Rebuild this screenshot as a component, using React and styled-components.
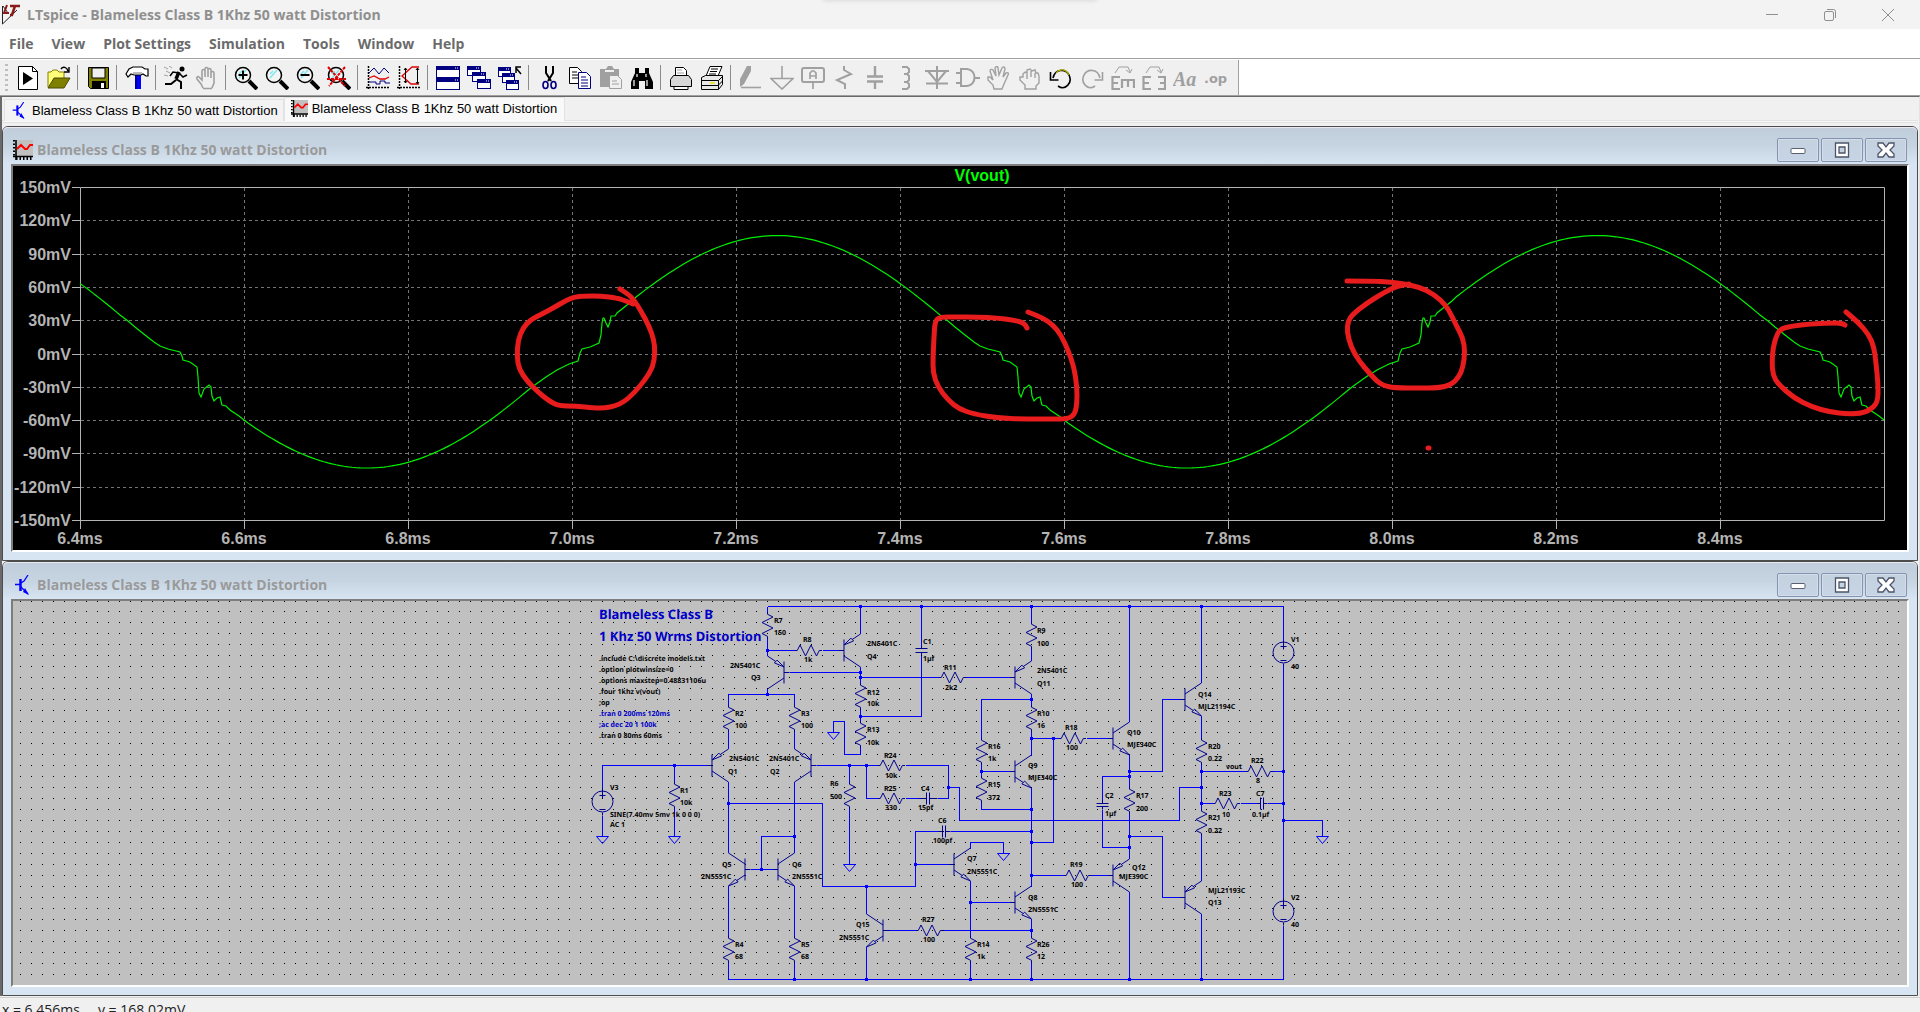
import styled, { createGlobalStyle } from "styled-components";

const ui = `"Open Sans", "Noto Sans", sans-serif`;
const arial = `"Liberation Sans", Arial, sans-serif`;

const GlobalStyle = createGlobalStyle`
  * {
    box-sizing: border-box;
  }

  body {
    margin: 0;
    background: #f0f0f0;
    font-family: ${ui};
  }

  button {
    padding: 0;
    border: 0;
    background: none;
    font: inherit;
    color: inherit;
  }

  svg {
    display: block;
    flex: none;
  }
`;

const StyledApp = styled.div`
  display: flex;
  flex-direction: column;
  height: 100vh;
  overflow: hidden;

  > * {
    flex: none;
  }
`;

const StyledTitleBar = styled.header`
  position: relative;
  display: flex;
  align-items: center;
  height: 29px;
  padding-right: 3px;
  background: #f3f3f3;
  color: #8f8f8f;

  h1 {
    flex: 1;
    margin: 0 0 0 7px;
    font-size: 14px;
    font-weight: 700;
    line-height: 28px;
  }
`;

const StyledSnapHint = styled.div`
  position: absolute;
  top: -8px;
  left: 50%;
  width: 276px;
  height: 8px;
  margin-left: -138px;
  border-radius: 8px;
  box-shadow: 0 1px 4px rgba(0, 0, 0, 0.1);
`;

const StyledCaptionButton = styled.button`
  display: flex;
  align-items: center;
  justify-content: center;
  width: 58px;
  height: 29px;
`;

const StyledMenu = styled.nav`
  display: flex;
  gap: 18px;
  height: 30px;
  padding: 0 9px;
  background: #fff;
  border-bottom: 1px solid #a0a0a0;

  button {
    color: #6b6b6b;
    font-size: 14px;
    font-weight: 700;
    line-height: 28px;
  }
`;

const StyledToolbarRow = styled.div`
  display: flex;
  height: 37px;
  background: #fff;
  border-top: 1px solid #fff;
  border-bottom: 1px solid #a0a0a0;
`;

const StyledToolbar = styled.div`
  display: flex;
  align-items: center;
  padding-right: 7px;
  background: #f0f0f0;
  border-right: 1px solid #a0a0a0;
`;

const StyledGrip = styled.div`
  width: 3px;
  height: 28px;
  margin: 0 4px 0 5px;
  background: repeating-linear-gradient(#bdbdbd 0 2px, transparent 2px 5px);
`;

const StyledToolButton = styled.button`
  display: flex;
  align-items: center;
  justify-content: center;
  width: 31px;
  height: 34px;
`;

const StyledSeparator = styled.div`
  width: 1px;
  height: 25px;
  margin: 0 4px 0 3px;
  background: #8c8c8c;
`;

const StyledWorkspace = styled.main`
  border: solid #696969;
  border-width: 1px 1px 0 2px;
  border-right-color: #e3e3e3;
  padding-right: 1px;
`;

const StyledTabs = styled.div`
  display: flex;
  align-items: flex-start;
  height: 29px;
  padding-left: 2px;
  background: linear-gradient(
    transparent 23px,
    #e2e2e2 23px 24px,
    #f8f8f8 24px 25px,
    #e2e2e2 25px 26px,
    transparent 26px
  );
`;

const StyledTab = styled.button`
  display: flex;
  align-items: center;
  gap: 4px;
  height: ${({ $active }) => ($active ? "24px" : "22px")};
  margin-top: ${({ $active }) => ($active ? "0" : "2px")};
  padding: ${({ $active }) => ($active ? "0 7px 2px 6px" : "0 5px 0 6px")};
  background: ${({ $active }) => ($active ? "#f9f9f9" : "#f3f3f3")};
  border: solid #e2e2e2;
  border-width: 1px 1px 0;
  color: #000;
  font-family: ${arial};
  font-size: 13px;
`;

const StyledWindow = styled.section`
  padding: 0 8px 8px;
  background: #d7e4f2;
  border: 1px solid #4d4d4d;
  border-radius: 6px 6px 0 0;
`;

const StyledWindowHeader = styled.div`
  display: flex;
  align-items: center;
  gap: 2px;
  height: 37px;
  margin: 0 -8px;
  padding: 8px 10px 0;
  border-radius: 5px 5px 0 0;
  background: linear-gradient(#c0ccda, #c6d4e2 50%, #d7e4f2);
  box-shadow: inset 0 1px #e9e9f2;

  h2 {
    flex: 1;
    margin: 0 0 0 2px;
    color: #9a9a9a;
    font-size: 14px;
    font-weight: 700;
    line-height: 24px;
  }
`;

const StyledWindowButton = styled.button`
  display: flex;
  align-items: center;
  justify-content: center;
  width: 42px;
  height: 24px;
  background: linear-gradient(#c4d1de, #c6d4e6);
  border: 1px solid #8593b0;
  border-radius: 2px;
  box-shadow: inset 0 0 0 1px #d3deea;
`;

const StyledFrame = styled.div`
  border: 2px solid;
  border-color: #7d7d7d #fff #fff #7d7d7d;
  background: ${({ $background }) => $background};

  svg {
    width: 100%;
    height: auto;
  }
`;

const StyledStatusBar = styled.footer`
  display: flex;
  gap: 18px;
  height: 28px;
  margin-top: 1px;
  padding: 2px;
  border-top: 1px solid #d0d0d0;
  color: #222;
  font-size: 14px;
  line-height: 20px;
`;

const K = "#000";
const G = "#a0a0a0";
const N = "#000080";

const Magnifier = ({ children }) => (
  <>
    <path d="M15 15l8 8" stroke={K} strokeWidth="4" />
    <circle cx="9" cy="9" r="7.5" fill="#f4f4f4" stroke={K} strokeWidth="1.5" />
    <path d="M5 12l7-8M5 8l3-3" stroke="#7fe9f0" strokeWidth="1.5" />
    {children}
  </>
);

const MiniWindow = ({ x, y, w = 14, h = 10 }) => (
  <>
    <rect x={x + 0.5} y={y + 0.5} width={w - 1} height={h - 1} fill="#fff" stroke={N} />
    <path d={`M${x} ${y + 2}h${w}`} stroke={N} strokeWidth="4" />
    <path d={`M${x + w - 5} ${y + 2}h1m1 0h1`} stroke="#fff" />
  </>
);

const Palm = () => (
  <path
    d="M8 22.5h9M8 22l-2-4-4-5c-1-2 1-3 2-2l3 3V5c0-2 3-2 3 0v6V3c0-2 3-2 3 0v8V4c0-2 3-2 3 0v8V7c0-2 3-2 3 0v10l-2 5"
    fill="none"
    stroke={G}
    strokeWidth="1.6"
  />
);

const icons = {
  run: (
    <>
      <path d="M2.500.5h14l5 5v18h-19z" fill="#fff" stroke={K} />
      <path d="M16.500.5v5h5" fill="none" stroke={K} />
      <path d="M7 6v13l10-6.500z" fill={K} />
    </>
  ),
  open: (
    <>
      <path d="M1 21V6h3l2-2h4l2 2h5v6" fill="#ffff7a" stroke="#808000" />
      <path d="M1 22l6-10h16l-6 10z" fill="#808000" stroke="#4a4a00" />
      <path d="M14 3c2-3 6-2 7 2M22 1v5h-5" fill="none" stroke={K} strokeWidth="1.4" />
    </>
  ),
  save: (
    <>
      <path d="M2.500 1.500h20v21h-18l-2-2z" fill="#808000" stroke={K} />
      <path d="M6 2h13v10H6z" fill="#f0f0f0" stroke={K} />
      <path d="M6 15h14v8H6z" fill={K} />
      <path d="M15 17h3v5h-3z" fill="#fff" />
    </>
  ),
  hammer: (
    <>
      <path d="M10 9h6v14h-6z" fill="#0000ff" />
      <path d="M10 9h2v14h-2z" fill="#000090" />
      <path
        d="M1 8l3-5 4-2h9l3 2h3v7h-2l-3-2-2 1h-7l-3-1-3 3z"
        fill="#fff"
        stroke={K}
        strokeWidth="1.200"
      />
      <path d="M8 7h9" stroke={G} strokeWidth="1.500" />
    </>
  ),
  runner: (
    <>
      <circle cx="18" cy="3" r="2.500" fill={K} />
      <path d="M15 6l-3 7" stroke={K} strokeWidth="3.500" />
      <path d="M12 13l5 3v7M12 14l-5 4H1" fill="none" stroke={K} strokeWidth="2" />
      <path d="M15 7L9 6l-3 4M15 7l4 4 4-2" fill="none" stroke={K} strokeWidth="1.500" />
      <path d="M0 1l4 2M2 5l4 2M5 0l3 2M0 9l4 1" stroke={G} />
    </>
  ),
  hand: <Palm />,
  zoomIn: (
    <Magnifier>
      <path d="M9 4.500v9M4.500 9h9" stroke={K} strokeWidth="2" />
    </Magnifier>
  ),
  zoomArea: <Magnifier />,
  zoomOut: (
    <Magnifier>
      <path d="M4.500 9h9" stroke={K} strokeWidth="2" />
    </Magnifier>
  ),
  zoomFit: (
    <Magnifier>
      <path d="M1 1l17 19M18 1L2 20M0 13h20" stroke="#e00000" strokeWidth="2" strokeDasharray="3 1" />
    </Magnifier>
  ),
  traces: (
    <>
      <path d="M2.500 0v23M0 21.500h24" stroke={K} strokeDasharray="2 1" strokeWidth="1.500" />
      <path d="M3 7l5-5 5 6 5-6 5 5" fill="none" stroke={N} />
      <path d="M3 12l5-2 6 3 5 0 4-2" fill="none" stroke="#e00000" strokeWidth="1.300" />
      <path d="M3 16h7v2h4v-3h5v2h5" fill="none" stroke={N} />
    </>
  ),
  autorange: (
    <>
      <path d="M2.500 0v23M0 21.500h24" stroke={K} strokeDasharray="2 1" strokeWidth="1.500" />
      <path d="M22 1h-7L5 10l9 8h8" fill="none" stroke="#e00000" strokeWidth="1.300" />
      <path d="M8.500 2v15M7 4l1.500-2L10 4M7 15l1.500 2 1.500-2M20.500 2v16M19 4l1.500-2L22 4M19 16l1.500 2 1.500-2" fill="none" stroke={K} />
    </>
  ),
  tile: (
    <>
      <MiniWindow x={0} y={0} w={24} h={12} />
      <MiniWindow x={0} y={12} w={24} h={12} />
    </>
  ),
  cascade: (
    <>
      <MiniWindow x={0} y={0} />
      <MiniWindow x={5} y={6} />
      <MiniWindow x={10} y={13} />
    </>
  ),
  restoreAll: (
    <>
      <MiniWindow x={0} y={1} w={13} />
      <MiniWindow x={4} y={7} w={13} />
      <MiniWindow x={8} y={14} w={13} />
      <path d="M23 8l-5-6M18 7V1h5" fill="none" stroke={K} strokeWidth="1.500" />
    </>
  ),
  cut: (
    <>
      <path d="M9 0v7l5 8M16 0v7l-5 8" fill="none" stroke={K} strokeWidth="2" />
      <ellipse cx="8.500" cy="19" rx="2.500" ry="3.500" fill="none" stroke={N} strokeWidth="1.600" />
      <ellipse cx="16.500" cy="19" rx="2.500" ry="3.500" fill="none" stroke={N} strokeWidth="1.600" />
    </>
  ),
  copy: (
    <>
      <path d="M1.500 1.500h8l4 4v12h-12z" fill="#fff" stroke={K} />
      <path d="M4 6h5M4 9h7M4 12h7" stroke={K} />
      <path d="M10.500 6.500h8l4 4v12h-12z" fill="#fff" stroke={N} />
      <path d="M13 11h5M13 14h7M13 17h7M13 20h7" stroke={N} />
    </>
  ),
  paste: (
    <>
      <path d="M1 3h6l2-3h4l2 3h5v18H1z" fill={G} />
      <path d="M6 4h9v2H6z" fill="#f0f0f0" />
      <path d="M10.500 9.500h8l4 4v9h-12z" fill="#f0f0f0" stroke={G} />
      <path d="M13 15h5M13 18h7" stroke={G} />
    </>
  ),
  find: (
    <>
      <path d="M5 2h4v5h6V2h4v5l4 9v7h-8v-8H9v8H1v-7l4-9z" fill={K} />
      <path d="M4 14v6M17 14v6M7 8v3M16 8v3" stroke="#fff" strokeWidth="1.200" />
    </>
  ),
  print: (
    <>
      <path d="M6.500 9V1.500h8l3 3V9" fill="#fff" stroke={K} />
      <path d="M4.500 9.500h15l3 4v7h-21v-7z" fill="#d8d8d8" stroke={K} />
      <path d="M5 20.500h14v3H5z" fill="#fff" stroke={K} />
      <path d="M8 4h5M8 7h7" stroke={G} />
    </>
  ),
  printSetup: (
    <>
      <path d="M6 10l4-9.500h12L18 10z" fill="#fff" stroke={K} />
      <path d="M11 3h7M10 5.500h7M9 8h7" stroke={K} />
      <path d="M1.500 11.500l4-2h17v9l-4 5h-17z" fill="#e8e8e8" stroke={K} />
      <path d="M1 14.500h17.500v9M1 19.500h17M18.500 14.500l4-4M18.500 19l4-4" fill="none" stroke={K} />
      <path d="M10 17h5" stroke="#e6e600" strokeWidth="1.500" />
    </>
  ),
  wire: (
    <>
      <path d="M1 21v-8L8 0h4v5L5 18z" fill={G} />
      <path d="M2 21.500h20" stroke={G} strokeWidth="1.600" />
    </>
  ),
  ground: <path d="M12 0v12M1 12.500h22L12 23z" fill="none" stroke={G} strokeWidth="1.600" />,
  label: (
    <>
      <rect x="1" y="2" width="22" height="14" rx="2" fill="none" stroke={G} strokeWidth="2" />
      <path d="M9 13V7l2-2h2l2 2v6M9 10h6M12 16v7" fill="none" stroke={G} strokeWidth="1.700" />
    </>
  ),
  resistor: <path d="M12 0v4l7 4L5 14l8 4v5" fill="none" stroke={G} strokeWidth="2" />,
  capacitor: <path d="M12 0v10M4 10.500h16M4 15.500h16M12 16v7" fill="none" stroke={G} strokeWidth="2.400" />,
  inductor: (
    <path d="M8 1h5l2 2v3l-2 2h-3 3l2 2v4l-2 2h-3 3l2 2v3l-2 2H8" fill="none" stroke={G} strokeWidth="2" />
  ),
  diode: <path d="M12 0v23M0 5h24M3 5l9 11 9-11M1 17.500h22" fill="none" stroke={G} strokeWidth="2" />,
  gate: <path d="M0 7h5M0 17h5M5 3v17M4 3h7c10 1 10 16 0 17H4M19 12h5" fill="none" stroke={G} strokeWidth="2" />,
  move: (
    <path
      d="M7 23l-1-4-5-5v-3h2l3 3-3-9c0-2 2-2 3-1l3 6-1-8c1-2 3-2 3 0l1 7 3-7c1-2 3-1 3 1l-2 8 3-4c2-1 3 0 2 2l-4 9-2 5z"
      fill="none"
      stroke={G}
      strokeWidth="1.400"
    />
  ),
  drag: (
    <path
      d="M7 23v-4l-5-5v-3h3V8l2-2 2 1V4l3-1 2 2 3-1 1 3h2l1 3v7l-3 3v3zM9 8v5M13 5v6M17 7v5"
      fill="none"
      stroke={G}
      strokeWidth="1.400"
    />
  ),
  undo: (
    <>
      <path d="M4 12C6 3 16 2 20 9c4 8-4 16-11 11" fill="none" stroke={K} strokeWidth="1.600" />
      <path d="M7 7c4-5 10-4 13 2" fill="none" stroke="#b0b000" strokeWidth="1.200" />
      <path d="M1.500 6v8h8" fill="none" stroke={K} strokeWidth="1.600" />
    </>
  ),
  redo: (
    <>
      <path d="M20 12C18 3 8 2 4 9c-4 8 4 16 11 11" fill="none" stroke={G} strokeWidth="1.600" />
      <path d="M22.500 6v8h-8" fill="none" stroke={G} strokeWidth="1.600" />
    </>
  ),
  rotate: (
    <>
      <path d="M4 7l4-6h9l2 5M15 4l4 3 2-4" fill="none" stroke={G} />
      <path d="M9 11H1.500v12H9M1 17h6M11 22v-8h12v8M17 14v7" fill="none" stroke={G} strokeWidth="2.200" />
    </>
  ),
  mirror: (
    <>
      <path d="M4 7l4-6h9l2 5M15 4l4 3 2-4" fill="none" stroke={G} />
      <path d="M9 11H1.500v12H9M1 17h6M16 11h7v12h-7M18 17h5" fill="none" stroke={G} strokeWidth="2.200" />
    </>
  ),
  text: (
    <text x="0" y="20" fill={G} fontFamily="Liberation Serif, serif" fontStyle="italic" fontWeight="700" fontSize="20">
      Aa
    </text>
  ),
  directive: (
    <text x="0" y="17" fill={G} fontFamily="DejaVu Sans, sans-serif" fontWeight="700" fontSize="13">
      .op
    </text>
  ),
};

const toolGroups = [
  [["run", "Run"], ["open", "Open"]],
  [["save", "Save"]],
  [["hammer", "Control panel"]],
  [["runner", "Run simulation"], ["hand", "Halt"]],
  [["zoomIn", "Zoom in"], ["zoomArea", "Zoom area"], ["zoomOut", "Zoom out"], ["zoomFit", "Zoom to fit"]],
  [["traces", "Pick visible traces"], ["autorange", "Autorange"]],
  [["tile", "Tile windows"], ["cascade", "Cascade windows"], ["restoreAll", "Close windows"]],
  [["cut", "Cut"], ["copy", "Copy"], ["paste", "Paste"], ["find", "Find"]],
  [["print", "Print"], ["printSetup", "Print setup"]],
  [
    ["wire", "Wire"],
    ["ground", "Ground"],
    ["label", "Label net"],
    ["resistor", "Resistor"],
    ["capacitor", "Capacitor"],
    ["inductor", "Inductor"],
    ["diode", "Diode"],
    ["gate", "Component"],
    ["move", "Move"],
    ["drag", "Drag"],
    ["undo", "Undo"],
    ["redo", "Redo"],
    ["rotate", "Rotate"],
    ["mirror", "Mirror"],
    ["text", "Text"],
    ["directive", "SPICE directive"],
  ],
];

const menus = ["File", "View", "Plot Settings", "Simulation", "Tools", "Window", "Help"];
const documentName = "Blameless Class B 1Khz 50 watt Distortion";

const LogoIcon = () => (
  <svg width="20" height="22" viewBox="0 0 20 22">
    <path d="M2.500 2v18L17 6" fill="none" stroke="#222" />
    <path d="M3 2l5 7" fill="none" stroke="#222" />
    <path d="M7 1L4 9h5" fill="none" stroke="#8b1a1a" strokeWidth="2" />
    <path d="M10 2h10M15 2l-3 9h-2" fill="none" stroke="#8b1a1a" strokeWidth="2.500" />
  </svg>
);

const PlotIcon = ({ size }) => (
  <svg width={size} height={size} viewBox="0 0 20 20">
    <path d="M3 0h17v16H3z" fill="#c0c0c0" />
    <path d="M3 0v20M0 16.500h20" stroke={K} strokeWidth="1.600" />
    <path d="M1 0v17" stroke={K} strokeWidth="2" strokeDasharray="1.500 2" />
    <path d="M3 18.500h17" stroke={K} strokeWidth="3" strokeDasharray="1.500 2" />
    <path d="M4 9l4-4 4 4h2l3-4h3" fill="none" stroke="#f00" strokeWidth="2" />
  </svg>
);

const SchematicIcon = ({ size }) => (
  <svg width={size} height={size} viewBox="0 0 20 20">
    <path d="M2 9.500h5M8 8l3-2 4-6M8 12l7 7" fill="none" stroke="#00f" strokeWidth="1.300" />
    <path d="M7.500 4v12" stroke="#00f" strokeWidth="2.500" />
    <path d="M12 13l4 7-6-3z" fill="#00f" />
  </svg>
);

// Plot scale: 820 px per ms from 6.4 ms, 0 mV at y = 354, 30 mV every 33.2 px
const toX = (ms) => 80 + (ms - 6.4) * 820;
const toY = (mv) => 354 - mv * 1.107;

const risingGlitch = [
  [532, 387], [546, 377], [557, 370], [569, 364], [578, 361], [580, 353], [582, 349], [590, 347],
  [599, 343], [601, 335], [602, 323], [603, 318], [604, 318], [606, 323], [608, 327], [610, 322],
  [611, 316], [615, 316], [617, 313], [632, 301],
];

const fallingGlitch = [
  [940, 315], [948, 321], [955, 327], [965, 335], [974, 342], [980, 346], [988, 349], [1000, 352],
  [1002, 356], [1003, 360], [1010, 362], [1017, 367], [1018, 377], [1019, 393], [1021, 397], [1024, 389],
  [1029, 385], [1031, 387], [1032, 396], [1034, 401], [1037, 398], [1040, 397], [1042, 405], [1046, 406],
  [1050, 410], [1059, 416], [1064, 420],
];

const glitches = [
  [fallingGlitch, -820],
  [risingGlitch, 0],
  [fallingGlitch, 0],
  [risingGlitch, 820],
  [fallingGlitch, 820],
].map(([points, shift]) => points.map(([x, y]) => [x + shift, y]));

function buildTrace() {
  const points = [];
  for (let x = 80; x <= 1884; x += 4) {
    const glitch = glitches.find((g) => x >= g[0][0] && x <= g[g.length - 1][0]);
    if (glitch) {
      points.push(...glitch);
      x = glitch[glitch.length - 1][0];
    } else {
      const ms = 6.4 + (x - 80) / 820;
      points.push([x, toY(2 + 105 * Math.sin(2 * Math.PI * ms))]);
    }
  }
  return points.map((p) => p.join(" ")).join(" ");
}

// Joins the midpoints of a rough stroke with quadratic curves
function smooth(text) {
  const p = text.split(" ").map((pair) => pair.split(",").map(Number));
  let d = `M${p[0]}`;
  for (let i = 1; i < p.length - 1; i++) {
    d += `Q${p[i]} ${(p[i][0] + p[i + 1][0]) / 2},${(p[i][1] + p[i + 1][1]) / 2}`;
  }
  return `${d}L${p[p.length - 1]}`;
}

const markers = [
  "620,289 628,294 634,300 641,311 649,326 654,340 655,353 653,367 645,380 634,393 624,402 615,406 605,408 594,408 576,406 559,406 549,401 538,392 527,381 519,369 517,357 518,340 523,328 530,320 542,314 555,307 565,301 574,297 584,296 601,296 617,298 626,301 633,304",
  "1027,328 1025,323 1013,320 997,318 978,317 955,317 940,317 935,321 934,337 933,357 933,373 938,387 948,400 959,409 974,414 997,418 1024,419 1051,419 1068,419 1075,414 1077,403 1077,387 1074,367 1068,350 1061,335 1053,325 1043,318 1028,312",
  "1347,281 1371,281 1391,282 1411,285 1427,290 1441,300 1449,310 1456,325 1463,338 1465,352 1463,367 1459,377 1451,385 1438,388 1419,388 1395,388 1381,385 1371,375 1359,361 1351,347 1347,332 1348,321 1353,314 1367,303 1385,292 1397,286 1409,284",
  "1845,325 1842,323 1830,323 1810,324 1792,326 1780,329 1776,337 1773,348 1772,363 1773,375 1778,384 1794,398 1812,407 1830,412 1848,414 1864,413 1874,407 1878,400 1878,383 1876,363 1874,347 1869,335 1859,323 1846,312",
];

const timeTicks = [6.4, 6.6, 6.8, 7, 7.2, 7.4, 7.6, 7.8, 8, 8.2, 8.4];
const voltTicks = [150, 120, 90, 60, 30, 0, -30, -60, -90, -120, -150];
const gridY = (mv) => Math.floor(354 - (mv * 333) / 300) + 0.5;
const gridX = (ms) => Math.round(toX(ms)) + 0.5;

function Waveform() {
  return (
    <svg viewBox="13 166 1894 384" role="img" aria-label="V(vout)">
      <g stroke="#747474" strokeDasharray="3 3">
        {voltTicks.slice(1, -1).map((mv) => (
          <path key={mv} d={`M81 ${gridY(mv)}H1884`} />
        ))}
        {timeTicks.slice(1).map((ms) => (
          <path key={ms} d={`M${gridX(ms)} 188V520`} />
        ))}
      </g>
      <g stroke="#b4b4b4" fill="none">
        <path d="M80.500 187.500H1884.500V520.500H80.500z" />
        {voltTicks.map((mv) => (
          <path key={mv} d={`M72 ${gridY(mv)}H80`} />
        ))}
        {timeTicks.map((ms) => (
          <path key={ms} d={`M${gridX(ms)} 520V529`} />
        ))}
      </g>
      <g fill="#b4b4b4" fontFamily={arial} fontWeight="700" fontSize="16">
        {voltTicks.map((mv) => (
          <text key={mv} x="71" y={gridY(mv) + 5.5} textAnchor="end">
            {mv}mV
          </text>
        ))}
        {timeTicks.map((ms) => (
          <text key={ms} x={toX(ms)} y="544" textAnchor="middle">
            {ms.toFixed(1)}ms
          </text>
        ))}
        <text x="982" y="181" fill="#00ff00" textAnchor="middle">
          V(vout)
        </text>
      </g>
      <polyline points={buildTrace()} fill="none" stroke="#00f000" strokeWidth="1.200" />
      <g fill="none" stroke="#e81c1c" strokeWidth="5" strokeLinecap="round" strokeLinejoin="round">
        {markers.map((marker) => (
          <path key={marker} d={smooth(marker)} />
        ))}
        <path d="M1428 448h1" />
      </g>
    </svg>
  );
}

const wires = [
  "M767 606H1283V640M767 606V611M767 638V655M767 650H794M822 650H838M860 606V633M860 666V682M789 672H860",
  "M860 677H938M965 677H1009M860 709V720M860 716H921V655M921 606V645M860 747V754H844V721H833V732",
  "M767 688V694M728 704V694H794V704M728 731V748M794 731V748M706 765H602V787M602 815V836M674 765V781M674 808V836",
  "M728 781V852M728 803H822V886H915V831H937M950 831H1031M915 864H948M794 781V852M794 836H761V869M750 869H772",
  "M728 885V935M794 885V935M728 962V979H1283V925M794 962V979M816 765H877M905 765H948V798H937M866 765V798H877M905 798H918",
  "M948 787H959V820H1179V787H1201M849 765V781M849 808V864M866 886V913M866 946V979M888 930H915M943 930H1031",
  "M970 848V842H1003V853M970 880V935M970 902H1009M970 962V979M1031 787V886M1031 918V935M1031 962V979",
  "M1031 606V621M1031 648V660M1031 693V704M1031 699H981V737M1031 731V755M1031 738H1058M1086 738H1107M1053 738V842H1031",
  "M981 764V775M981 771H1009M981 802V809H1031M1031 875H1063M1090 875H1107",
  "M1129 606V721M1129 754V786M1129 771H1162V699H1179M1129 776H1102V799M1102 809V847H1129M1129 813V858",
  "M1129 836H1162V897H1179M1129 891V979M1201 606V682M1201 715V737M1201 764V808M1201 835V880M1201 913V979",
  "M1201 771H1245M1272 771H1283M1201 803H1212M1240 803H1256M1267 803H1283M1283 664V897M1283 820H1322V836",
];

const junctions = [
  [860, 606], [921, 606], [1031, 606], [1129, 606], [1201, 606], [767, 650], [860, 672], [860, 677],
  [767, 694], [860, 716], [674, 765], [849, 765], [866, 765], [948, 787], [728, 803], [794, 836],
  [761, 869], [866, 886], [915, 864], [794, 979], [866, 979], [970, 979], [1031, 979], [1129, 979],
  [1201, 979], [1031, 699], [1031, 738], [1053, 738], [981, 771], [1031, 809], [1031, 831], [1031, 842],
  [1031, 875], [970, 902], [1031, 930], [1129, 771], [1129, 776], [1129, 836], [1129, 847], [1201, 771],
  [1201, 787], [1201, 803], [1283, 771], [1283, 803], [1283, 820],
];

const verticalResistors = [
  [767, 611], [860, 682], [860, 720], [728, 704], [794, 704], [674, 781], [849, 781], [728, 935],
  [794, 935], [1031, 621], [1031, 704], [981, 737], [981, 775], [1129, 786], [1201, 737], [1201, 808],
  [970, 935], [1031, 935],
];

const horizontalResistors = [
  [794, 650], [938, 677], [877, 765], [877, 798], [1058, 738], [1245, 771], [1212, 803], [1063, 875], [915, 930],
];

// [collector column, base row, pnp, base on the right]
const transistors = [
  [767, 672, true, true], [860, 650, true, false], [728, 765, true, false], [794, 765, true, true],
  [728, 869, false, true], [794, 869, false, false], [866, 930, false, true], [970, 864, false, false],
  [1031, 902, false, false], [1031, 771, false, false], [1031, 677, true, false], [1129, 738, false, false],
  [1129, 875, true, false], [1201, 699, false, false], [1201, 897, true, false],
];

const sources = [[602, 801], [1283, 652], [1283, 911]];
const grounds = [[602, 836], [674, 836], [849, 864], [833, 732], [1003, 853], [1322, 836]];

const labels = [
  [774, 620, "R7"], [774, 632, "150"], [803, 639, "R8"], [804, 659, "1k"], [730, 665, "2N5401C"],
  [751, 677, "Q3"], [867, 643, "2N5401C"], [867, 656, "Q4"], [923, 641, "C1"], [923, 658, "1µf"],
  [944, 667, "R11"], [945, 687, "2k2"], [867, 692, "R12"], [867, 703, "10k"], [867, 729, "R13"],
  [867, 742, "10k"], [735, 713, "R2"], [735, 725, "100"], [801, 713, "R3"], [801, 725, "100"],
  [729, 758, "2N5401C"], [728, 771, "Q1"], [769, 758, "2N5401C"], [770, 771, "Q2"], [884, 755, "R24"],
  [885, 775, "10k"], [610, 787, "V3"], [680, 790, "R1"], [680, 802, "10k"], [830, 783, "R6"],
  [830, 796, "500"], [884, 788, "R25"], [921, 788, "C4"], [885, 807, "330"], [918, 807, "15pf"],
  [610, 814, "SINE(7.40mv 5mv 1k 0 0 0)"], [610, 824, "AC 1"], [722, 864, "Q5"], [701, 876, "2N5551C"],
  [792, 864, "Q6"], [792, 876, "2N5551C"], [735, 944, "R4"], [735, 956, "68"], [801, 944, "R5"],
  [801, 956, "68"], [856, 924, "Q15"], [839, 937, "2N5551C"], [922, 919, "R27"], [923, 939, "100"],
  [938, 820, "C6"], [933, 840, "100pf"], [1037, 630, "R9"], [1037, 643, "100"], [1037, 670, "2N5401C"],
  [1037, 683, "Q11"], [1037, 713, "R10"], [1037, 725, "16"], [1065, 727, "R18"], [1066, 747, "100"],
  [1127, 732, "Q10"], [1127, 744, "MJE340C"], [988, 746, "R16"], [988, 758, "1k"], [1028, 765, "Q9"],
  [1028, 777, "MJE340C"], [988, 784, "R15"], [988, 797, "372"], [1105, 795, "C2"], [1105, 813, "1µf"],
  [1136, 795, "R17"], [1136, 808, "200"], [1198, 694, "Q14"], [1198, 706, "MJL21194C"], [1208, 746, "R20"],
  [1208, 758, "0.22"], [1226, 766, "vout"], [1251, 760, "R22"], [1256, 780, "8"], [1219, 793, "R23"],
  [1256, 793, "C7"], [1222, 814, "10"], [1252, 814, "0.1µf"], [1291, 639, "V1"], [1291, 666, "40"],
  [1208, 817, "R21"], [1208, 830, "0.22"], [967, 858, "Q7"], [967, 871, "2N5551C"], [1028, 897, "Q8"],
  [1028, 909, "2N5551C"], [1070, 864, "R19"], [1071, 884, "100"], [1132, 867, "Q12"], [1119, 876, "MJE390C"],
  [1208, 890, "MJL21193C"], [1208, 902, "Q13"], [1291, 897, "V2"], [1291, 924, "40"], [977, 944, "R14"],
  [977, 956, "1k"], [1037, 944, "R26"], [1037, 956, "12"],
];

const directives = [
  [".include C:\\discrete models.txt", K],
  [".option plotwinsize=0", K],
  [".options maxstep=0.48831106u", K],
  [".four 1khz v(vout)", K],
  [";op", K],
  [".tran 0 200ms 120ms", "#0000c8"],
  [";ac dec 20 1 100k", "#0000c8"],
  [".tran 0 80ms 60ms", K],
];

function gridDots() {
  let d = "";
  for (let row = 0; row < 35; row++) {
    const y = row === 0 ? 601 : 600 + row * 11;
    for (let col = 0; col < 172; col++) {
      d += `M${Math.round(20 + col * 10.985)} ${y}h1v1h-1z`;
    }
  }
  return d;
}

const zigzag = "M0 0V8L16 16L-16 32L16 48L-16 64L0 72V80";
const transistorBody = "M-64 0H-48M-48 -32V32M-48 -16L0 -48";
const npnEmitter = "M-48 16L-24 32M0 48L-20 28L-28 36z";
const pnpEmitter = "M0 48L-24 32M-48 16L-20 28L-28 36z";

function Schematic() {
  return (
    <svg viewBox="13 601 1894 384" role="img" aria-label="Schematic">
      <path d={gridDots()} fill={K} shapeRendering="crispEdges" />
      <g transform="translate(.5 .5)" fill="none" stroke="#000090">
        {verticalResistors.map(([x, y]) => (
          <path key={`${x}-${y}`} d={zigzag} transform={`translate(${x} ${y}) scale(.344)`} vectorEffect="non-scaling-stroke" />
        ))}
        {horizontalResistors.map(([x, y]) => (
          <path
            key={`${x}-${y}`}
            d={zigzag}
            transform={`translate(${x} ${y}) rotate(-90) scale(.344)`}
            vectorEffect="non-scaling-stroke"
          />
        ))}
        {transistors.map(([x, y, pnp, flipped]) => (
          <path
            key={`${x}-${y}`}
            d={transistorBody + (pnp ? pnpEmitter : npnEmitter)}
            transform={`translate(${x} ${y}) scale(${flipped ? -0.344 : 0.344} ${pnp ? -0.344 : 0.344})`}
            vectorEffect="non-scaling-stroke"
          />
        ))}
        {sources.map(([x, y]) => (
          <g key={`${x}-${y}`} transform={`translate(${x} ${y})`}>
            <circle r="10.500" />
            <path d="M0 -14V-3M-3 -6H3M-3 8H3M0 11V14" />
          </g>
        ))}
        <path d="M915 648h12M915 652h12M921 645v3M921 652v3M1096 803h12M1096 806h12M1102 799v4M1102 806v3" />
        <path d="M926 792v12M929 792v12M918 798h8M929 798h8M942 825v12M945 825v12M937 831h5M945 831h5M1260 797v12M1263 797v12M1256 803h4M1263 803h4" />
      </g>
      <g transform="translate(.5 .5)" fill="none" stroke="#0000ff">
        <path d={wires.join("")} shapeRendering="crispEdges" />
        {grounds.map(([x, y]) => (
          <path key={`${x}-${y}`} d={`M${x - 6} ${y}h12l-6 7z`} />
        ))}
      </g>
      {junctions.map(([x, y]) => (
        <rect key={`${x}-${y}`} x={x - 1} y={y - 1} width="3" height="3" fill="#0000ff" />
      ))}
      <g fontFamily={`"Noto Sans", sans-serif`} fontWeight="700" fontSize="7" textRendering="geometricPrecision">
        {labels.map(([x, y, text]) => (
          <text key={`${x}-${y}`} x={x} y={y + 3}>
            {text}
          </text>
        ))}
        {directives.map(([text, color], i) => (
          <text key={text} x="599" y={661 + i * 11} fill={color}>
            {text}
          </text>
        ))}
        <g fill="#0000c8" fontSize="13">
          <text x="599" y="619">
            Blameless Class B
          </text>
          <text x="599" y="641">
            1 Khz 50 Wrms Distortion
          </text>
        </g>
      </g>
    </svg>
  );
}

function ChildWindow({ icon, background, children }) {
  return (
    <StyledWindow>
      <StyledWindowHeader>
        {icon}
        <h2>{documentName}</h2>
        <StyledWindowButton aria-label="Minimize">
          <svg width="18" height="16">
            <rect x="2" y="6.500" width="14" height="5" rx="1" fill="#fff" stroke="#5a6070" />
          </svg>
        </StyledWindowButton>
        <StyledWindowButton aria-label="Maximize">
          <svg width="18" height="16">
            <path d="M2.500 1h13v14h-13zM6 5v6h6V5z" fill="#fff" fillRule="evenodd" stroke="#4c5468" strokeWidth="1.300" />
          </svg>
        </StyledWindowButton>
        <StyledWindowButton aria-label="Close">
          <svg width="18" height="16">
            <path
              d="M1 1h5l3 4 3-4h5v3l-4 4 4 4v3h-5l-3-4-3 4H1v-3l4-4-4-4z"
              fill="#fff"
              stroke="#4c5468"
              strokeWidth="1.300"
            />
          </svg>
        </StyledWindowButton>
      </StyledWindowHeader>
      <StyledFrame $background={background}>{children}</StyledFrame>
    </StyledWindow>
  );
}

function Toolbar() {
  return (
    <StyledToolbarRow>
      <StyledToolbar role="toolbar">
        <StyledGrip />
        {toolGroups.map((group, i) => [
          i > 0 && <StyledSeparator key={`separator-${i}`} />,
          ...group.map(([name, label]) => (
            <StyledToolButton key={name} aria-label={label}>
              <svg width="24" height="24" viewBox="0 0 24 24">
                {icons[name]}
              </svg>
            </StyledToolButton>
          )),
        ])}
      </StyledToolbar>
    </StyledToolbarRow>
  );
}

export default function App() {
  return (
    <StyledApp>
      <GlobalStyle />
      <StyledTitleBar>
        <StyledSnapHint />
        <LogoIcon />
        <h1>LTspice - {documentName}</h1>
        <StyledCaptionButton aria-label="Minimize">
          <svg width="12" height="12" fill="none" stroke="#8f8f8f">
            <path d="M0 5.500h12" />
          </svg>
        </StyledCaptionButton>
        <StyledCaptionButton aria-label="Restore">
          <svg width="12" height="12" fill="none" stroke="#8f8f8f">
            <rect x=".5" y="2.500" width="9" height="9" rx="1.500" />
            <path d="M3 .5h6.500q2 0 2 2V9" />
          </svg>
        </StyledCaptionButton>
        <StyledCaptionButton aria-label="Close">
          <svg width="12" height="12" fill="none" stroke="#8f8f8f">
            <path d="M0 0l12 12M12 0L0 12" />
          </svg>
        </StyledCaptionButton>
      </StyledTitleBar>
      <StyledMenu>
        {menus.map((menu) => (
          <button key={menu}>{menu}</button>
        ))}
      </StyledMenu>
      <Toolbar />
      <StyledWorkspace>
        <StyledTabs>
          <StyledTab>
            <SchematicIcon size={17} />
            {documentName}
          </StyledTab>
          <StyledTab $active>
            <PlotIcon size={17} />
            {documentName}
          </StyledTab>
        </StyledTabs>
        <ChildWindow icon={<PlotIcon size={20} />} background="#000">
          <Waveform />
        </ChildWindow>
        <ChildWindow icon={<SchematicIcon size={20} />} background="#c0c0c0">
          <Schematic />
        </ChildWindow>
      </StyledWorkspace>
      <StyledStatusBar>
        <span>x = 6.456ms</span>
        <span>y = 168.02mV</span>
      </StyledStatusBar>
    </StyledApp>
  );
}
